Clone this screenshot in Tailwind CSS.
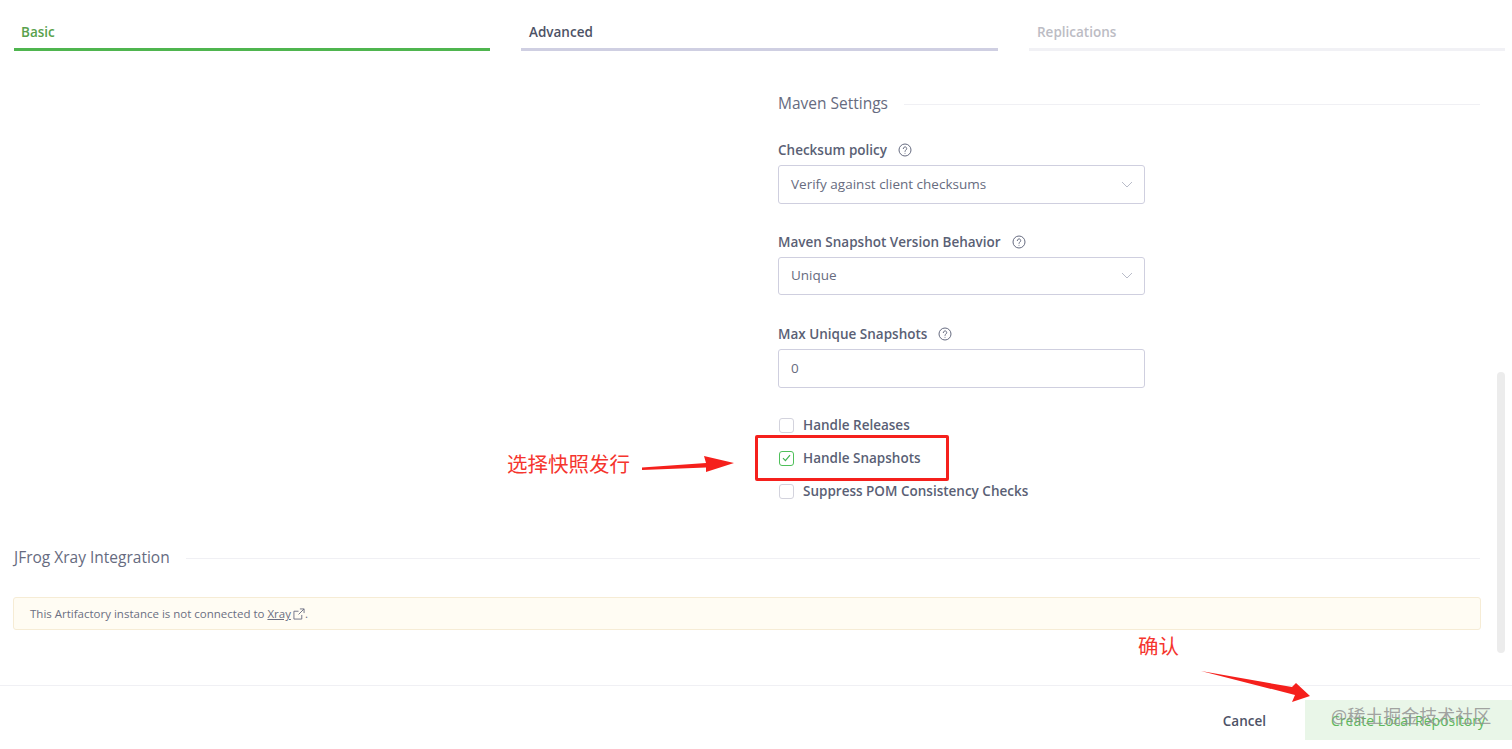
<!DOCTYPE html>
<html lang="en">

<head>
    <meta charset="UTF-8">
    <meta name="viewport" content="width=device-width, initial-scale=1.0">
    <title>New Local Repository</title>
    <script src="https://cdn.jsdelivr.net/npm/@tailwindcss/browser@4"></script>
</head>

<body class="bg-white font-['Open_Sans','Noto_Sans_CJK_SC',sans-serif] text-[#5a5f75]">
    <div class="relative h-[749px] w-[1512px] overflow-hidden flex flex-col">

        <!-- Tabs -->
        <div class="flex gap-[31px] pl-[14px] pr-[7px] pt-[22px] shrink-0">
            <div class="w-[476px] h-[29px] border-b-[3px] border-[#4fb54f] pl-[7px] text-[13.500px] leading-[20px] font-semibold text-[#58a14c]">Basic</div>
            <div class="w-[477px] h-[29px] border-b-[3px] border-[#cfcfe2] pl-[8px] text-[13.500px] leading-[20px] font-semibold text-[#4d5266]">Advanced</div>
            <div class="w-[476px] h-[29px] border-b-[3px] border-[#f1f1f5] pl-[8px] text-[13.500px] leading-[20px] font-semibold text-[#bcbcc4]">Replications</div>
        </div>

        <!-- Form body -->
        <div class="flex-1 pl-[14px] pr-[32px]">
            <div class="ml-[764px] pt-[42px]">
                <div class="flex items-center gap-4 h-[22px]">
                    <span class="text-[15.500px] text-[#666b80]">Maven Settings</span>
                    <div class="flex-1 h-px bg-[#f0f0f4]"></div>
                </div>

                <div class="mt-[25px] flex items-center gap-[11px] h-[20px] text-[13.500px] font-semibold">
                    Checksum policy
                    <svg class="w-[14px] h-[14px] text-[#666b80]" viewBox="0 0 14 14" fill="none" stroke="currentColor" stroke-width="1"><circle cx="7" cy="7" r="6"/><path d="M5.3 5.6a1.7 1.7 0 1 1 2.6 1.4c-.6.4-.9.7-.9 1.4" stroke-linecap="round"/><circle cx="7" cy="10.2" r=".5" fill="currentColor" stroke="none"/></svg>
                </div>
                <div class="mt-[5px] w-[367px] h-[39px] flex items-center justify-between pl-3 pr-[11px] pb-px border border-[#cfcfdf] rounded-[3px] text-[13.500px] text-[#676c80]">
                    Verify against client checksums
                    <svg class="w-[12px] h-[7px] text-[#b9bcc9]" viewBox="0 0 12 7" fill="none" stroke="currentColor"><path d="M1 1l5 5 5-5"/></svg>
                </div>

                <div class="mt-[28px] flex items-center gap-[11px] h-[20px] text-[13.500px] font-semibold">
                    Maven Snapshot Version Behavior
                    <svg class="w-[14px] h-[14px] text-[#666b80]" viewBox="0 0 14 14" fill="none" stroke="currentColor" stroke-width="1"><circle cx="7" cy="7" r="6"/><path d="M5.3 5.6a1.7 1.7 0 1 1 2.6 1.4c-.6.4-.9.7-.9 1.4" stroke-linecap="round"/><circle cx="7" cy="10.2" r=".5" fill="currentColor" stroke="none"/></svg>
                </div>
                <div class="mt-[5px] w-[367px] h-[38px] flex items-center justify-between pl-3 pr-[11px] pb-px border border-[#cfcfdf] rounded-[3px] text-[13.500px] text-[#676c80]">
                    Unique
                    <svg class="w-[12px] h-[7px] text-[#b9bcc9]" viewBox="0 0 12 7" fill="none" stroke="currentColor"><path d="M1 1l5 5 5-5"/></svg>
                </div>

                <div class="mt-[29px] flex items-center gap-[11px] h-[20px] text-[13.500px] font-semibold">
                    Max Unique Snapshots
                    <svg class="w-[14px] h-[14px] text-[#666b80]" viewBox="0 0 14 14" fill="none" stroke="currentColor" stroke-width="1"><circle cx="7" cy="7" r="6"/><path d="M5.3 5.6a1.7 1.7 0 1 1 2.6 1.4c-.6.4-.9.7-.9 1.4" stroke-linecap="round"/><circle cx="7" cy="10.2" r=".5" fill="currentColor" stroke="none"/></svg>
                </div>
                <div class="mt-[5px] w-[367px] h-[39px] flex items-center pl-3 pb-px border border-[#cfcfdf] rounded-[3px] text-[13.500px] text-[#676c80]">0</div>

                <div class="mt-[27px] flex flex-col gap-[13px] text-[13.500px] font-semibold">
                    <label class="flex items-center gap-[9px] h-[20px] pl-px">
                        <span class="w-[15px] h-[15px] rounded-[3px] border border-[#d3d3dd]"></span>
                        Handle Releases
                    </label>
                    <label class="flex items-center gap-[9px] h-[20px] pl-px">
                        <span class="w-[15px] h-[15px] rounded-[3px] border border-[#4fc05a] flex items-center justify-center">
                            <svg class="w-[9px] h-[8px] text-[#3fb44f]" viewBox="0 0 9 8" fill="none" stroke="currentColor" stroke-width="1.200"><path d="M1 4.2l2.4 2.4L8 1.2"/></svg>
                        </span>
                        Handle Snapshots
                    </label>
                    <label class="flex items-center gap-[9px] h-[20px] pl-px">
                        <span class="w-[15px] h-[15px] rounded-[3px] border border-[#d3d3dd]"></span>
                        Suppress POM Consistency Checks
                    </label>
                </div>
            </div>

            <!-- Xray -->
            <div class="mt-[46px] flex items-center gap-4 h-[22px]">
                <span class="text-[15.500px] text-[#666b80]">JFrog Xray Integration</span>
                <div class="flex-1 h-px bg-[#f0f0f4]"></div>
            </div>
            <div class="mt-[28px] -ml-px -mr-px h-[33px] flex items-center pl-[16px] pt-px bg-[#fffcf3] border border-[#f6ecd5] rounded-[3px] text-[11.500px] text-[#6b6f82]">
                This Artifactory instance is not connected to&nbsp;<span class="underline">Xray</span>
                <svg class="w-[12px] h-[12px] ml-[2px] text-[#6b6f82]" viewBox="0 0 13 13" fill="none" stroke="currentColor" stroke-width="1"><path d="M9.5 7.5V12H1V3.5h5M7.5 1H12v4.500M12 1L6 7"/></svg>.
            </div>
        </div>

        <!-- Footer -->
        <div class="shrink-0 h-[64px] border-t border-[#f0f0f4]">
            <div class="flex justify-end items-center h-[40px] mt-[14px]">
                <span class="mr-[39px] pt-[2px] text-[13.500px] font-semibold text-[#4d5266]">Cancel</span>
                <div class="w-[207px] h-[40px] flex items-center justify-center pr-px pt-px bg-[#e9f6e8] text-[14px] font-medium text-[#5cb85c]">Create Local Repository</div>
            </div>
        </div>

        <!-- Scrollbar -->
        <div class="absolute left-[1497px] top-[372px] w-[8px] h-[281px] rounded-[4px] bg-[#ececec]"></div>

        <!-- Annotations drawn over the screenshot -->
        <div class="absolute left-[755px] top-[435px] w-[194px] h-[46px] border-[3px] border-[#f5201c] rounded-[2px]"></div>
        <div class="absolute left-[507px] top-[451px] text-[20.500px] leading-[26px] text-[#f5352e]">选择快照发行</div>
        <svg class="absolute left-[640px] top-[452px]" width="96" height="24" viewBox="0 0 96 24"><path d="M2 15.500L66 11 64 4 94 11 66 20 66 15.500 2 18Z" fill="#f5201c"/></svg>
        <div class="absolute left-[1138px] top-[633px] text-[20.500px] leading-[26px] text-[#f5352e]">确认</div>
        <svg class="absolute left-[1198px] top-[668px]" width="116" height="38" viewBox="0 0 116 38"><path d="M3 3L94 19 98 15 112 28 94 34 97 27Z" fill="#f5201c"/></svg>
        <div class="absolute left-[1331px] top-[704px] text-[18px] leading-[24px] text-[#8d8d8d]/80">@稀土掘金技术社区</div>
    </div>
</body>

</html>
